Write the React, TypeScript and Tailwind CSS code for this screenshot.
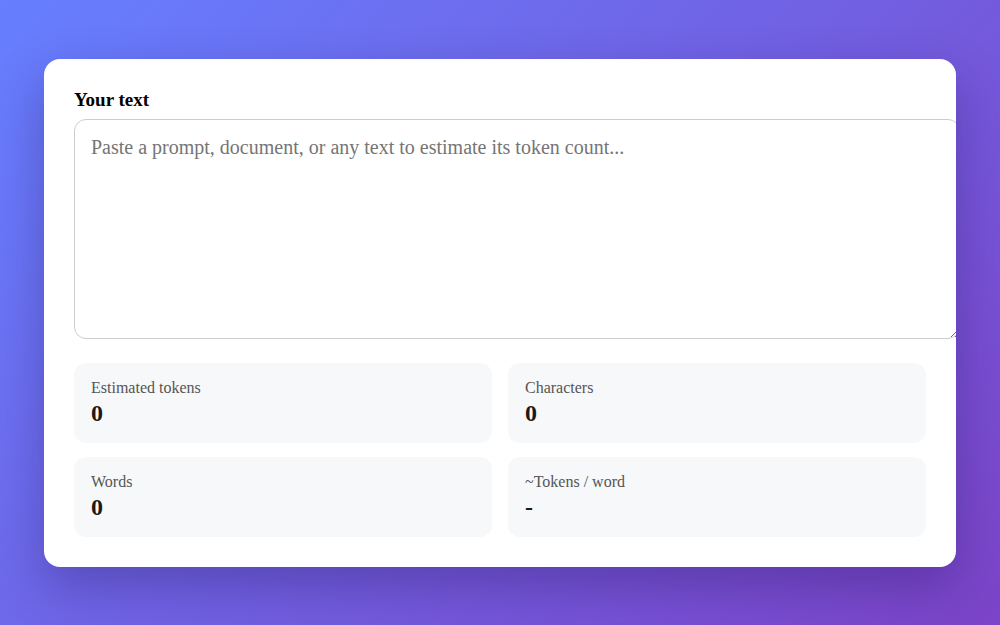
import { useState } from 'react';

const stats = [
  { label: 'Estimated tokens', key: 'tokens' },
  { label: 'Characters', key: 'chars' },
  { label: 'Words', key: 'words' },
  { label: '~Tokens / word', key: 'ratio' },
] as const;

export default function App() {
  const [text, setText] = useState('');

  const chars = text.length;
  const words = text.trim() ? text.trim().split(/\s+/).length : 0;
  const tokens = Math.ceil(chars / 4);
  const values: Record<string, string> = {
    tokens: String(tokens),
    chars: String(chars),
    words: String(words),
    ratio: words ? (tokens / words).toFixed(2) : '-',
  };

  return (
    <div className="min-h-screen flex items-center justify-center px-[44px] bg-[linear-gradient(135deg,#667fff_0%,#7c44c8_100%)] font-['Liberation_Serif',serif]">
      <div className="w-full bg-white rounded-2xl p-[30px] overflow-hidden shadow-[0_20px_50px_rgba(30,10,80,0.3)]">
        <label className="block text-[19px] leading-[22px] font-bold text-black mb-2">Your text</label>
        <textarea
          value={text}
          onChange={(e) => setText(e.target.value)}
          placeholder="Paste a prompt, document, or any text to estimate its token count..."
          className="block box-content w-full h-[186px] p-4 border border-[#ccc] rounded-xl text-[20px] leading-[23px] text-[#222] placeholder:text-[#757575] outline-none font-['Liberation_Serif',serif]"
        />
        <div className="grid grid-cols-2 gap-x-4 gap-y-[14px] mt-6">
          {stats.map((s) => (
            <div key={s.key} className="bg-[#f7f8fa] rounded-xl px-[17px] pt-4 pb-[18px]">
              <div className="text-[16px] leading-[18px] text-[#555]">{s.label}</div>
              <div className="mt-1 text-[24px] leading-[24px] font-bold text-[#1a1a1a]">{values[s.key]}</div>
            </div>
          ))}
        </div>
      </div>
    </div>
  );
}
